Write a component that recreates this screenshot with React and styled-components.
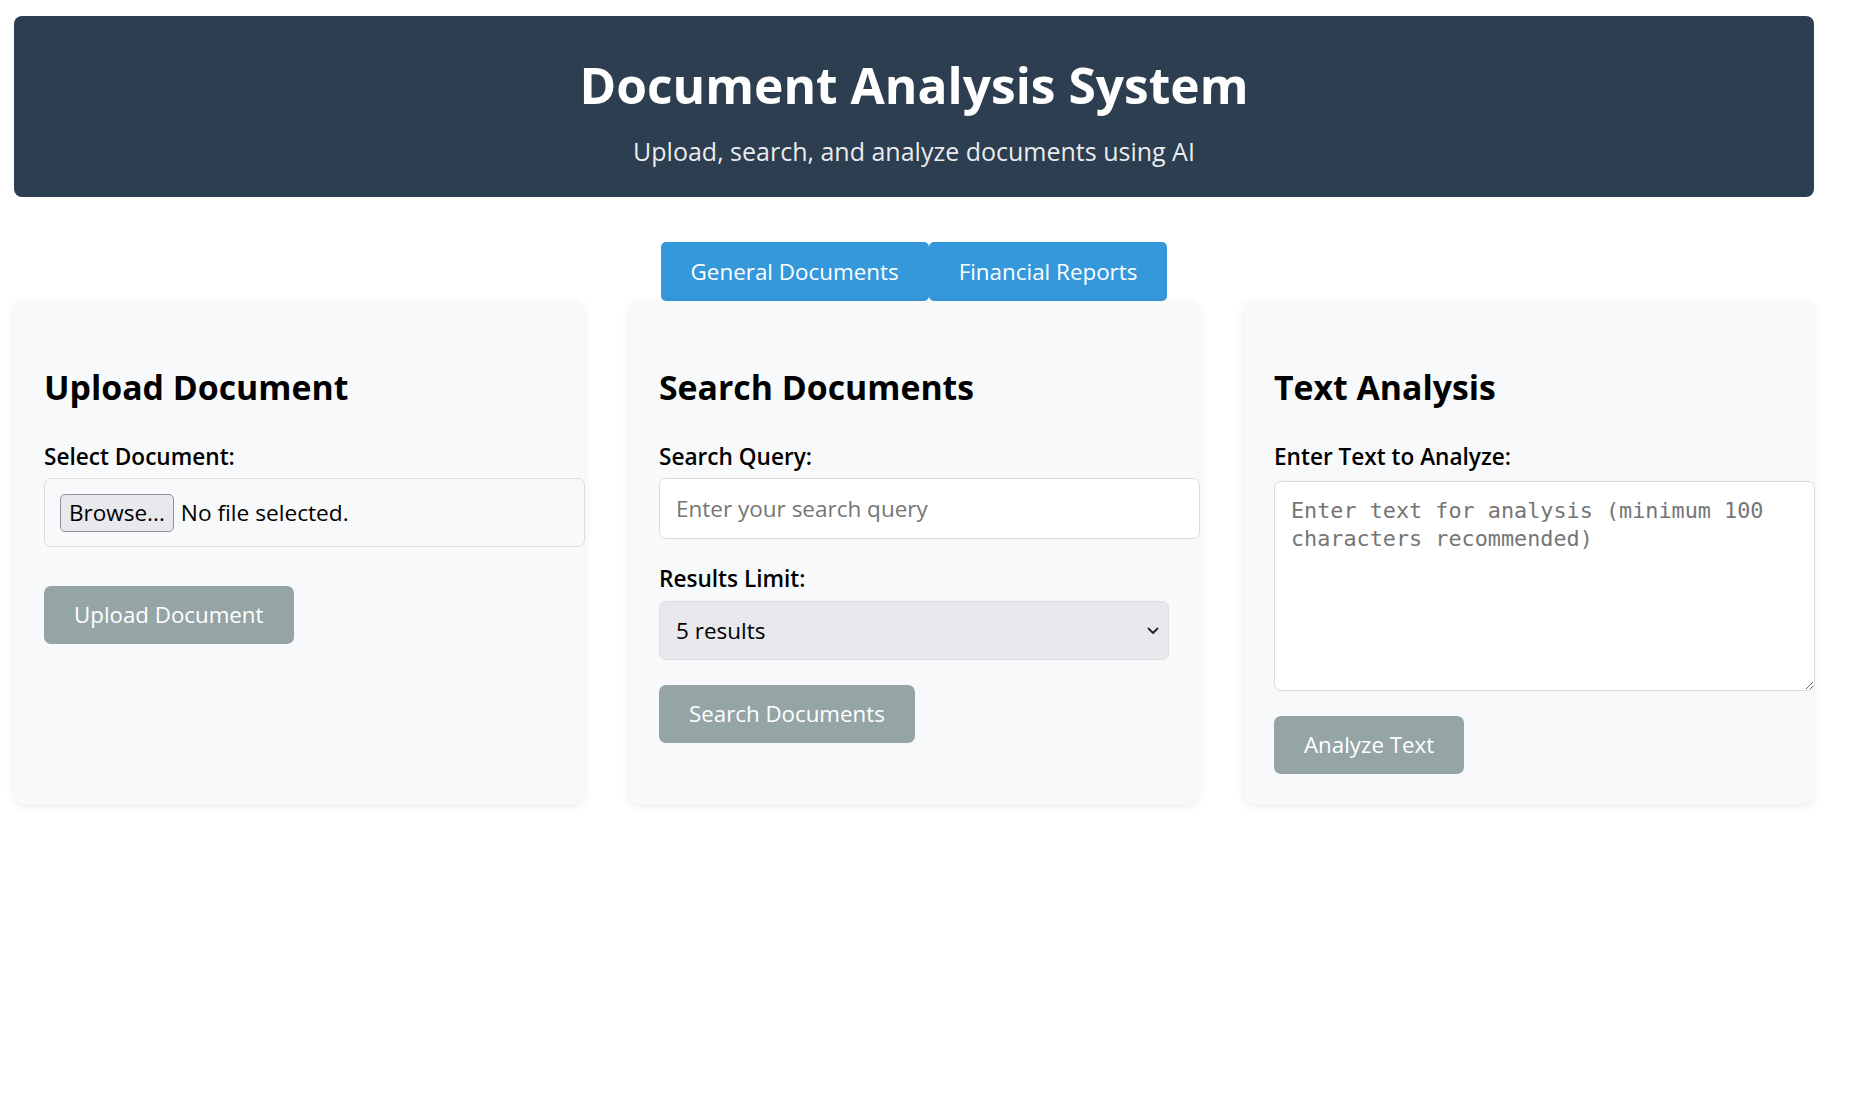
import React, { useState } from "react";
import styled, { createGlobalStyle } from "styled-components";

const GlobalStyle = createGlobalStyle`
  body {
    margin: 0;
    background: #ffffff;
    font-family: "Open Sans", "Noto Sans", sans-serif;
    color: #000;
  }
  * {
    font-family: inherit;
  }
`;

const Page = styled.div`
  width: 1800px;
  padding: 16px 0 40px 14px;
`;

const Header = styled.header`
  background: #2c3e50;
  color: #ffffff;
  border-radius: 8px;
  text-align: center;
  padding: 39px 20px 31px;
`;

const Title = styled.h1`
  margin: 0;
  font-size: 49.7px;
  line-height: 60px;
  font-weight: 700;
`;

const Subtitle = styled.p`
  margin: 21px 0 0;
  font-size: 25px;
  line-height: 30px;
  color: rgba(255, 255, 255, 0.92);
`;

const Tabs = styled.nav`
  display: flex;
  justify-content: center;
  margin-top: 45px;
`;

const Tab = styled.button`
  height: 59px;
  padding: 0 30px;
  border: none;
  border-radius: 5px;
  background: ${(props) => (props.active ? "#3498db" : "#3498db")};
  color: #ffffff;
  font-size: 22.4px;
  line-height: 59px;
  cursor: pointer;
`;

const Grid = styled.main`
  display: grid;
  grid-template-columns: repeat(3, 1fr);
  gap: 45px;
`;

const Card = styled.section`
  background: #f8f9fa;
  border-radius: 10px;
  padding: 30px 30px 30px;
  box-shadow: 0 2px 10px rgba(0, 0, 0, 0.08);
`;

const CardTitle = styled.h2`
  margin: 36px 0 35px;
  font-size: 33.8px;
  line-height: 40px;
  font-weight: 700;
`;

const FormGroup = styled.div`
  margin-bottom: ${(props) => props.gap || 25}px;
`;

const Label = styled.label`
  display: block;
  margin-bottom: ${(props) => props.space || 6}px;
  font-size: 22.6px;
  line-height: 30px;
  font-weight: 600;
`;

const FileBox = styled.div`
  box-sizing: border-box;
  width: calc(100% + 31px);
  height: 69px;
  display: flex;
  align-items: center;
  gap: 7px;
  padding: 0 15px;
  border: 1px solid #dcdcdc;
  border-radius: 7px;
  font-size: 22.7px;
`;

const BrowseButton = styled.span`
  box-sizing: border-box;
  height: 38px;
  padding: 0 8px;
  display: inline-flex;
  align-items: center;
  background: #e9e9ed;
  border: 1px solid #8f8f9d;
  border-radius: 5px;
  font-size: 22.5px;
`;

const TextInput = styled.input`
  box-sizing: border-box;
  display: block;
  width: calc(100% + 31px);
  height: 61px;
  padding: 0 16px;
  border: 1px solid #dcdcdc;
  border-radius: 7px;
  background: #ffffff;
  font-size: 22.5px;
  outline: none;
  &::placeholder {
    color: #757575;
  }
`;

const SelectWrap = styled.div`
  position: relative;
`;

const Select = styled.select`
  box-sizing: border-box;
  display: block;
  width: 100%;
  height: 59px;
  padding: 0 16px;
  border: 1px solid #dcdcdc;
  border-radius: 7px;
  background: #e9e9ed;
  color: #000;
  font-size: 22.5px;
  appearance: none;
  outline: none;
`;

const Chevron = styled.svg`
  position: absolute;
  right: 10px;
  top: 50%;
  margin-top: -4px;
  pointer-events: none;
`;

const TextArea = styled.textarea`
  box-sizing: border-box;
  display: block;
  width: calc(100% + 31px);
  height: 210px;
  margin-top: 9px;
  padding: 15px 16px;
  border: 1px solid #dcdcdc;
  border-radius: 7px;
  background: #ffffff;
  font-family: "DejaVu Sans Mono", "Liberation Mono", monospace;
  font-size: 21.8px;
  line-height: 28px;
  outline: none;
  &::placeholder {
    color: #757575;
  }
`;

const ActionButton = styled.button`
  height: 58px;
  padding: 0 30px;
  border: none;
  border-radius: 7px;
  background: #95a5a6;
  color: #ffffff;
  font-size: 22.3px;
  line-height: 58px;
  cursor: not-allowed;
`;

export default function App() {
  const [tab, setTab] = useState("general");
  const [query, setQuery] = useState("");
  const [limit, setLimit] = useState("5");
  const [text, setText] = useState("");

  return (
    <Page>
      <GlobalStyle />
      <Header>
        <Title>Document Analysis System</Title>
        <Subtitle>Upload, search, and analyze documents using AI</Subtitle>
      </Header>

      <Tabs>
        <Tab active={tab === "general"} onClick={() => setTab("general")}>
          General Documents
        </Tab>
        <Tab active={tab === "financial"} onClick={() => setTab("financial")}>
          Financial Reports
        </Tab>
      </Tabs>

      <Grid>
        <Card>
          <CardTitle>Upload Document</CardTitle>
          <FormGroup gap={39}>
            <Label>Select Document:</Label>
            <FileBox>
              <BrowseButton>Browse...</BrowseButton>
              <span>No file selected.</span>
            </FileBox>
          </FormGroup>
          <ActionButton disabled>Upload Document</ActionButton>
        </Card>

        <Card>
          <CardTitle>Search Documents</CardTitle>
          <FormGroup>
            <Label>Search Query:</Label>
            <TextInput
              value={query}
              onChange={(e) => setQuery(e.target.value)}
              placeholder="Enter your search query"
            />
          </FormGroup>
          <FormGroup>
            <Label space={7}>Results Limit:</Label>
            <SelectWrap>
              <Select value={limit} onChange={(e) => setLimit(e.target.value)}>
                <option value="5">5 results</option>
                <option value="10">10 results</option>
                <option value="20">20 results</option>
              </Select>
              <Chevron width="12" height="8" viewBox="0 0 12 8">
                <path
                  d="M1.5 1.5 L6 6 L10.5 1.5"
                  fill="none"
                  stroke="#222"
                  strokeWidth="1.8"
                  strokeLinecap="round"
                  strokeLinejoin="round"
                />
              </Chevron>
            </SelectWrap>
          </FormGroup>
          <ActionButton disabled>Search Documents</ActionButton>
        </Card>

        <Card>
          <CardTitle>Text Analysis</CardTitle>
          <FormGroup>
            <Label>Enter Text to Analyze:</Label>
            <TextArea
              value={text}
              onChange={(e) => setText(e.target.value)}
              placeholder="Enter text for analysis (minimum 100 characters recommended)"
            />
          </FormGroup>
          <ActionButton disabled>Analyze Text</ActionButton>
        </Card>
      </Grid>
    </Page>
  );
}
